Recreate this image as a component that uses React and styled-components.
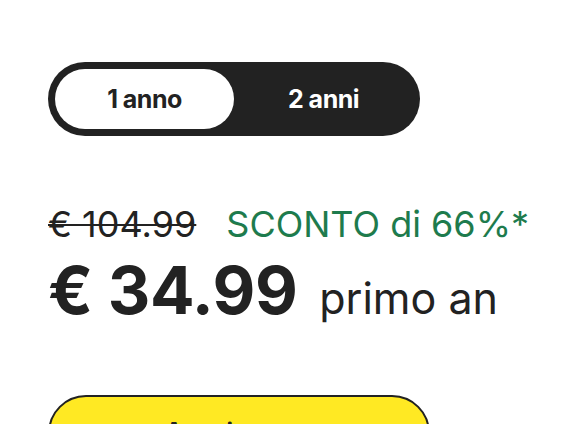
import React from "react";
import styled, { createGlobalStyle } from "styled-components";

const Global = createGlobalStyle`
  html, body { margin: 0; padding: 0; background: #fff; }
  body { font-family: Inter, "Noto Sans", sans-serif; color: #222; overflow: hidden; }
`;

const Page = styled.div`
  padding: 62px 0 0 48px;
  display: flex;
  flex-direction: column;
  align-items: flex-start;
`;

const Toggle = styled.div`
  width: 372px;
  height: 74px;
  box-sizing: border-box;
  padding: 7px;
  border-radius: 37px;
  background: #222;
  display: grid;
  grid-template-columns: 1fr 1fr;
`;

const Option = styled.div`
  display: flex;
  align-items: center;
  justify-content: center;
  border-radius: 30px;
  font-size: 25px;
  font-weight: 700;
  letter-spacing: -0.5px;
  background: ${(p) => (p.$active ? "#fff" : "transparent")};
  color: ${(p) => (p.$active ? "#222" : "#fff")};
`;

const OldRow = styled.div`
  margin-top: 68px;
  display: flex;
  align-items: baseline;
  gap: 30px;
  font-size: 36px;
  line-height: 40px;
  font-weight: 400;
`;

const Old = styled.span`
  text-decoration: line-through;
  text-decoration-thickness: 2px;
  color: #222;
`;

const Discount = styled.span`
  color: #1e7b4d;
`;

const PriceRow = styled.div`
  margin-top: 8px;
  display: flex;
  align-items: baseline;
  gap: 22px;
  white-space: nowrap;
`;

const Price = styled.span`
  font-size: 66px;
  line-height: 76px;
  font-weight: 700;
  letter-spacing: -0.5px;
`;

const Per = styled.span`
  font-size: 43px;
  font-weight: 400;
  color: #222;
`;

const Cta = styled.button`
  margin-top: 67px;
  width: 382px;
  height: 80px;
  box-sizing: border-box;
  border: 2.5px solid #222;
  border-radius: 38px;
  background: #ffe923;
  font-family: Inter, "Noto Sans", sans-serif;
  font-size: 24px;
  font-weight: 700;
  color: #222;
  display: flex;
  justify-content: center;
  align-items: flex-start;
  padding-top: 20px;
`;

export default function App() {
  return (
    <>
      <Global />
      <Page>
        <Toggle>
          <Option $active>1 anno</Option>
          <Option>2 anni</Option>
        </Toggle>
        <OldRow>
          <Old>€ 104.99</Old>
          <Discount>SCONTO di 66%*</Discount>
        </OldRow>
        <PriceRow>
          <Price>€ 34.99</Price>
          <Per>primo an</Per>
        </PriceRow>
        <Cta>Acquista ora</Cta>
      </Page>
    </>
  );
}
